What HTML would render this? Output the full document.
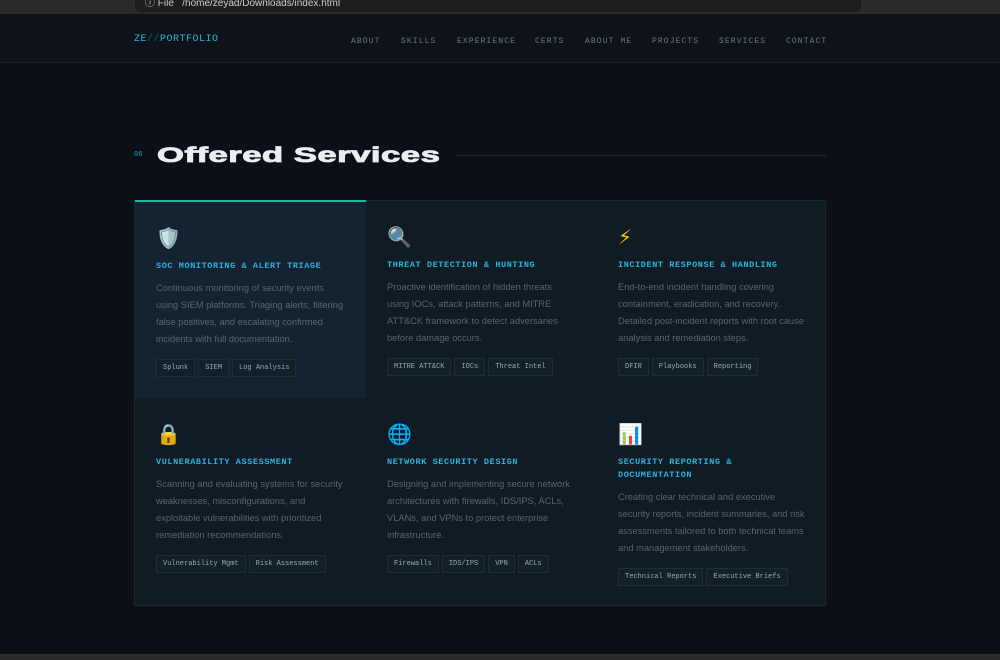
<!DOCTYPE html><html><head><style>
*{margin:0;padding:0;box-sizing:border-box}
body{width:1000px;height:660px;overflow:hidden;background:#0b1016;font-family:"Liberation Sans",sans-serif;position:relative}
.chrome{position:absolute;left:0;top:0;width:1000px;height:14px;background:#2a2b2d}
.url{position:absolute;left:135px;top:0;width:726px;height:12px;background:#1d1e20;border-radius:0 0 6px 6px;color:#ccc;font-size:10px;line-height:8px;padding-left:10px}
.nav{position:absolute;top:14px;left:0;width:1000px;height:49px;background:#0d1319;border-bottom:1px solid #16212a}
.logo{position:absolute;left:134px;top:20px;font-family:"Liberation Mono",monospace;font-size:10px;color:#2fb6d6;letter-spacing:0.5px}
.logo span{color:#1d5f72}
.links{position:absolute;top:23px;left:351px;font-family:"Liberation Mono",monospace;font-size:8px;color:#6c7880;letter-spacing:1.1px}
.links b{font-weight:normal;position:absolute;white-space:nowrap}
.num{position:absolute;left:134px;top:151px;font-family:"Liberation Mono",monospace;font-size:7px;color:#2f9fc0}
h1{position:absolute;left:157px;top:144px;font-size:21px;font-weight:900;color:#e8eef2;letter-spacing:0.3px;transform:scaleX(1.65);transform-origin:left;-webkit-text-stroke:0.8px #e8eef2}
.line{position:absolute;left:455px;top:155px;width:371px;height:1px;background:#1c2a33}
.grid{position:absolute;left:134px;top:200px;width:692px;height:406px;border:1px solid #1a2731;background:#111b24}
.card{position:absolute;width:231px;padding:22px 21px}
.card.hi{background:#142331;border-top:2px solid #1fb5a0}
.ic{font-size:20px;height:28px;line-height:28px;font-family:"DejaVu Sans",sans-serif}
.t{font-family:"Liberation Mono",monospace;font-weight:bold;font-size:8.5px;color:#2ab3dc;letter-spacing:0.6px;margin-top:8px;line-height:13px}
.d{font-size:9.3px;color:#56656f;line-height:17px;margin-top:7px}
.tags{margin-top:8px}
.tags span{display:inline-block;font-family:"Liberation Mono",monospace;font-size:7px;color:#9aa8b0;background:#122029;border:1px solid #1e2e38;padding:4px 6px;margin-right:3px}
.tb{position:absolute;left:0;top:654px;width:1000px;height:6px;background:#2b2c2e}
</style></head><body>
<div class="chrome"><div class="url">ⓘ File &nbsp; /home/zeyad/Downloads/index.html</div></div>
<div class="nav">
<div class="logo">ZE<span>//</span>PORTFOLIO</div>
<div class="links"><b style="left:0">ABOUT</b><b style="left:50px">SKILLS</b><b style="left:106px">EXPERIENCE</b><b style="left:184px">CERTS</b><b style="left:234px">ABOUT ME</b><b style="left:301px">PROJECTS</b><b style="left:368px">SERVICES</b><b style="left:435px">CONTACT</b></div>
</div>
<div class="num">06</div>
<h1>Offered Services</h1>
<div class="line"></div>
<div class="grid">
<div class="card hi" style="left:0;top:-1px;height:198px">
<div class="ic">🛡️</div><div class="t">SOC MONITORING &amp; ALERT TRIAGE</div>
<div class="d">Continuous monitoring of security events using SIEM platforms. Triaging alerts, filtering false positives, and escalating confirmed incidents with full documentation.</div>
<div class="tags"><span>Splunk</span><span>SIEM</span><span>Log Analysis</span></div></div>
<div class="card" style="left:231px;top:0">
<div class="ic">🔍</div><div class="t">THREAT DETECTION &amp; HUNTING</div>
<div class="d">Proactive identification of hidden threats using IOCs, attack patterns, and MITRE ATT&amp;CK framework to detect adversaries before damage occurs.</div>
<div class="tags"><span>MITRE ATT&amp;CK</span><span>IOCs</span><span>Threat Intel</span></div></div>
<div class="card" style="left:462px;top:0">
<div class="ic" style="color:#f5c211">⚡</div><div class="t">INCIDENT RESPONSE &amp; HANDLING</div>
<div class="d">End-to-end incident handling covering containment, eradication, and recovery. Detailed post-incident reports with root cause analysis and remediation steps.</div>
<div class="tags"><span>DFIR</span><span>Playbooks</span><span>Reporting</span></div></div>
<div class="card" style="left:0;top:197px">
<div class="ic">🔒</div><div class="t">VULNERABILITY ASSESSMENT</div>
<div class="d">Scanning and evaluating systems for security weaknesses, misconfigurations, and exploitable vulnerabilities with prioritized remediation recommendations.</div>
<div class="tags"><span>Vulnerability Mgmt</span><span>Risk Assessment</span></div></div>
<div class="card" style="left:231px;top:197px">
<div class="ic">🌐</div><div class="t">NETWORK SECURITY DESIGN</div>
<div class="d">Designing and implementing secure network architectures with firewalls, IDS/IPS, ACLs, VLANs, and VPNs to protect enterprise infrastructure.</div>
<div class="tags"><span>Firewalls</span><span>IDS/IPS</span><span>VPN</span><span>ACLs</span></div></div>
<div class="card" style="left:462px;top:197px">
<div class="ic">📊</div><div class="t">SECURITY REPORTING &amp; DOCUMENTATION</div>
<div class="d">Creating clear technical and executive security reports, incident summaries, and risk assessments tailored to both technical teams and management stakeholders.</div>
<div class="tags"><span>Technical Reports</span><span>Executive Briefs</span></div></div>
</div>
<div class="tb"></div>
</body></html>
